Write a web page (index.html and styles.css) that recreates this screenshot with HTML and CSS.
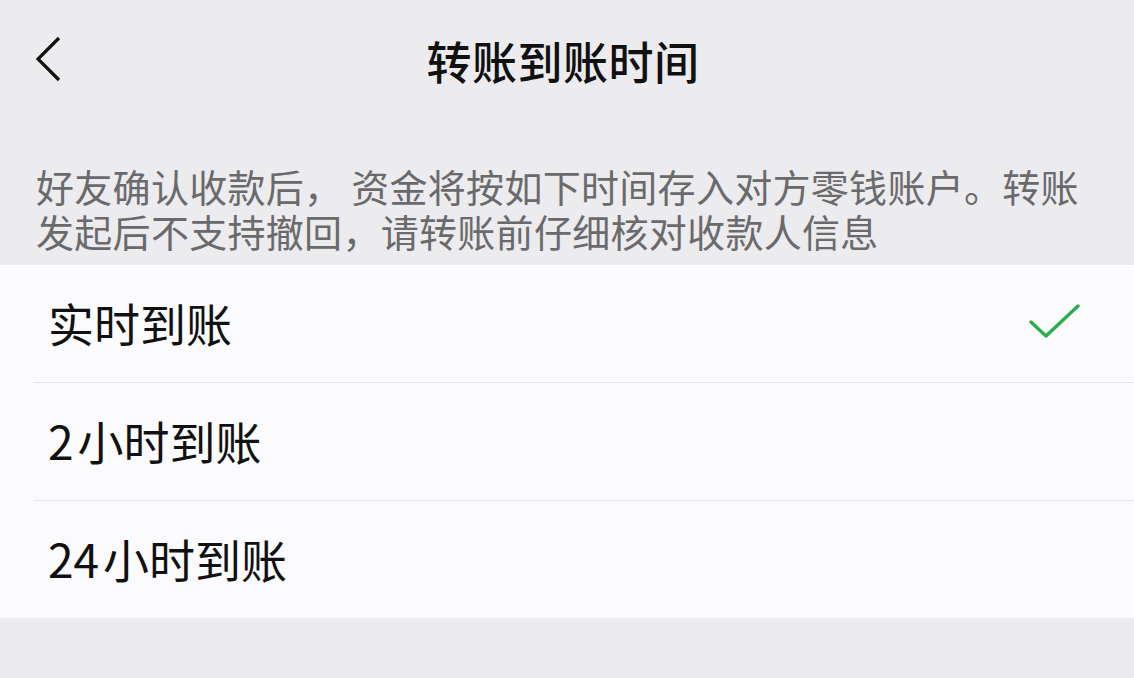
FILE: index.html
```html
<!DOCTYPE html>
<html lang="zh-CN">
<head>
    <meta charset="UTF-8">
    <meta name="viewport" content="width=device-width, initial-scale=1.0">
    <title>转账到账时间</title>
    <link rel="stylesheet" href="styles.css">
</head>
<body>

    <header class="topbar">
        <a class="back" href="#">
            <svg width="30" height="50" viewBox="0 0 30 50">
                <polyline points="23,4 2,25 23,46" />
            </svg>
        </a>
        <h1>转账到账时间</h1>
    </header>

    <p class="tips">好友确认收款后，&nbsp;资金将按如下时间存入对方零钱账户。转账发起后不支持撤回，请转账前仔细核对收款人信息</p>

    <ul class="options">
        <li class="option">
            <span>实时到账</span>
            <!-- 当前选中项 -->
            <svg class="check" width="52" height="40" viewBox="0 0 52 40">
                <polyline points="3,20 18,34 50,4" />
            </svg>
        </li>
        <li class="option"><span><i class="num">2</i>小时到账</span></li>
        <li class="option"><span><i class="num">24</i>小时到账</span></li>
    </ul>

</body>
</html>
```

FILE: styles.css
```css
body {
    margin: 0;
    padding: 0;
    height: 678px;
    background-color: #ecebed;
    color: #111;
    font-family: "Noto Sans CJK SC", "Noto Sans", sans-serif;
}

.topbar {
    position: relative;
    height: 120px;
    display: flex;
    align-items: center;
    justify-content: center;
}

.topbar h1 {
    margin: 0;
    font-size: 45px;
    font-weight: 500;
    color: #111;
    letter-spacing: 0.5px;
    position: relative;
    left: -4px;
}

.back {
    position: absolute;
    left: 36px;
    top: 34px;
}

.back svg polyline {
    fill: none;
    stroke: #111;
    stroke-width: 3.2;
}

.tips {
    margin: 0;
    padding: 43px 36px 12px 36px;
    font-size: 38px;
    line-height: 45px;
    letter-spacing: 0.3px;
    color: #6a6a6c;
    font-weight: 400;
}

.options {
    list-style: none;
    margin: 0;
    padding: 0 0 0 34px;
    background-color: #fbfafc;
}

.option {
    height: 117px;
    display: flex;
    align-items: center;
    justify-content: space-between;
    padding: 0 54px 0 14px;
    border-top: 1.5px solid #e6e5e8;
    font-size: 46px;
    color: #111;
}

.option:first-child {
    border-top: none;
}

.option span {
    position: relative;
    top: -2px;
}

.num {
    font-style: normal;
    margin-right: 4px;
}

.check {
    position: relative;
    top: -2px;
}

.check polyline {
    fill: none;
    stroke: #2aae4b;
    stroke-width: 3.4;
    stroke-linecap: round;
    stroke-linejoin: round;
}
```
